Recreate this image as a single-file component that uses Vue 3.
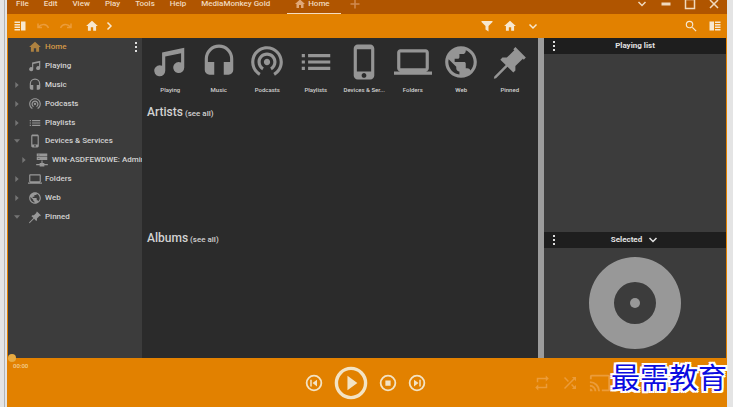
<script setup>
import { ref } from 'vue'

const icons = {
  home: 'M10 20v-6h4v6h5v-8h3L12 3 2 12h3v8z',
  note: 'M21 3v12.5a3.5 3.5 0 1 1-2-3.16V6.47L9 8.6v8.9a3.5 3.5 0 1 1-2-3.16V6z',
  headset: 'M12 1a9 9 0 0 0-9 9v7a3 3 0 0 0 3 3h3v-8H5v-2a7 7 0 0 1 14 0v2h-4v8h3a3 3 0 0 0 3-3v-7a9 9 0 0 0-9-9z',
  podcast: 'M12 10c-1.1 0-2 .9-2 2s.9 2 2 2 2-.9 2-2-.9-2-2-2zm6 2c0-3.31-2.69-6-6-6s-6 2.69-6 6c0 2.22 1.21 4.15 3 5.19l1-1.74c-1.19-.7-2-1.97-2-3.45 0-2.21 1.79-4 4-4s4 1.79 4 4c0 1.48-.81 2.75-2 3.45l1 1.74c1.79-1.04 3-2.97 3-5.19zM12 2C6.48 2 2 6.48 2 12c0 3.7 2.01 6.92 4.99 8.65l1-1.73C5.61 17.53 4 14.96 4 12c0-4.42 3.58-8 8-8s8 3.58 8 8c0 2.96-1.61 5.53-4 6.92l1 1.73c2.99-1.73 5-4.95 5-8.65 0-5.52-4.48-10-10-10z',
  list: 'M3 13h2v-2H3v2zm0 4h2v-2H3v2zm0-8h2V7H3v2zm4 4h14v-2H7v2zm0 4h14v-2H7v2zM7 7v2h14V7H7z',
  phone: 'M16 1H8C6.62 1 5.5 2.12 5.5 3.5v17C5.5 21.88 6.62 23 8 23h8c1.38 0 2.5-1.12 2.5-2.5v-17C18.5 2.12 17.38 1 16 1zm-4 21c-.83 0-1.5-.67-1.5-1.5S11.17 19 12 19s1.5.67 1.5 1.5S12.83 22 12 22zm4.5-4h-9V4h9v14z',
  laptop: 'M20 18c1.1 0 2-.9 2-2V6c0-1.1-.9-2-2-2H4c-1.1 0-2 .9-2 2v10c0 1.1.9 2 2 2H0v2h24v-2h-4zM4 6h16v10H4V6z',
  globe: 'M12 2C6.48 2 2 6.48 2 12s4.48 10 10 10 10-4.48 10-10S17.52 2 12 2zm-1 17.93c-3.95-.49-7-3.85-7-7.93 0-.62.08-1.21.21-1.79L9 15v1c0 1.1.9 2 2 2v1.93zm6.9-2.54c-.26-.81-1-1.39-1.9-1.39h-1v-3c0-.55-.45-1-1-1H8v-2h2c.55 0 1-.45 1-1V7h2c1.1 0 2-.9 2-2v-.41c2.93 1.19 5 4.06 5 7.41 0 2.08-.8 3.97-2.1 5.39z',
  pin: 'M10.4 15 3.2 22.2l-1.4.3.3-1.400 7.200-7.200-3.400-3.400 1.300-1.300h2.800l4.700-4.700-.6-.6 1.300-1.300 6.600 6.600-1.300 1.300-.6-.6-4.700 4.700v2.800l-1.300 1.300z',
  server: 'M3 1h18v5H3zm0 6h18v5H3zm8 6h2v4h3v2h6v2h-6v2H8v-2H2v-2h6v-2h3zM5 3v1h3V3zm0 6v1h3V9z',
  filter: 'M1 2h22v2l-8 8v11l-6-4v-7L1 4z',
  search: 'M15.5 14h-.79l-.28-.27A6.47 6.47 0 0 0 16 9.5 6.5 6.5 0 1 0 9.5 16c1.61 0 3.09-.59 4.23-1.57l.27.28v.79l6 6L21.5 20l-6-6zm-6 0a4.5 4.5 0 1 1 0-9 4.5 4.5 0 0 1 0 9z',
  panelLeft: 'M1 3h11v3H1zm0 5h11v3H1zm0 5h11v3H1zm0 5h11v3H1zM14 3h9v18h-9z',
  panelRight: 'M1 3h9v18H1zM12 3h11v3H12zm0 5h11v3H12zm0 5h11v3H12zm0 5h11v3H12z',
  repeat: 'M7 7h10v3l4-4-4-4v3H5v6h2V7zm10 10H7v-3l-4 4 4 4v-3h12v-6h-2v4z',
  shuffle: 'M10.59 9.17 5.41 4 4 5.41l5.17 5.17 1.42-1.41zM14.5 4l2.04 2.04L4 18.59 5.41 20 17.96 7.46 20 9.5V4h-5.5zm.33 9.41-1.41 1.41 3.13 3.13L14.5 20H20v-5.5l-2.04 2.04-3.13-3.13z',
  cast: 'M21 3H3c-1.1 0-2 .9-2 2v3h2V5h18v14h-7v2h7c1.1 0 2-.9 2-2V5c0-1.1-.9-2-2-2zM1 18v3h3c0-1.66-1.34-3-3-3zm0-4v2a5 5 0 0 1 5 5h2a7 7 0 0 0-7-7zm0-4v2a9 9 0 0 1 9 9h2A11 11 0 0 0 1 10z',
  previous: 'M12 1a11 11 0 1 0 0 22 11 11 0 0 0 0-22zm0 2.400a8.600 8.600 0 1 1 0 17.200 8.600 8.600 0 0 1 0-17.200zM7 7.500v9h2v-9zm9 0L10 12l6 4.500z',
  next: 'M12 1a11 11 0 1 0 0 22 11 11 0 0 0 0-22zm0 2.400a8.600 8.600 0 1 1 0 17.200 8.600 8.600 0 0 1 0-17.200zM15 7.500v9h2v-9zm-7 0 6 4.500-6 4.500z',
  stop: 'M12 1a11 11 0 1 0 0 22 11 11 0 0 0 0-22zm0 2.400a8.600 8.600 0 1 1 0 17.200 8.600 8.600 0 0 1 0-17.200zM8.500 8.500v7h7v-7z',
  play: 'M12 .5a11.5 11.5 0 1 0 0 23 11.5 11.5 0 0 0 0-23zm0 2.4a9.1 9.1 0 1 1 0 18.2 9.1 9.1 0 0 1 0-18.2zM9.500 6.800v10.400l7-5.200z',
  dots: 'M10 2h4v4h-4zm0 8h4v4h-4zm0 8h4v4h-4z',
  arrowRight: 'M7 3v18l10-9z',
  arrowDown: 'M3 7h18l-9 10z'
}

const menus = ['File', 'Edit', 'View', 'Play', 'Tools', 'Help', 'MediaMonkey Gold']

const tree = [
  { label: 'Home', icon: 'home', active: true },
  { label: 'Playing', icon: 'note' },
  { label: 'Music', icon: 'headset', arrow: 'arrowRight' },
  { label: 'Podcasts', icon: 'podcast', arrow: 'arrowRight' },
  { label: 'Playlists', icon: 'list', arrow: 'arrowRight' },
  { label: 'Devices & Services', icon: 'phone', arrow: 'arrowDown' },
  { label: 'WIN-ASDFEWDWE: Admin', icon: 'server', arrow: 'arrowRight', nested: true },
  { label: 'Folders', icon: 'laptop', arrow: 'arrowRight' },
  { label: 'Web', icon: 'globe', arrow: 'arrowRight' },
  { label: 'Pinned', icon: 'pin', arrow: 'arrowDown' }
]

const tiles = [
  { label: 'Playing', icon: 'note' },
  { label: 'Music', icon: 'headset' },
  { label: 'Podcasts', icon: 'podcast' },
  { label: 'Playlists', icon: 'list' },
  { label: 'Devices & Ser...', icon: 'phone' },
  { label: 'Folders', icon: 'laptop' },
  { label: 'Web', icon: 'globe' },
  { label: 'Pinned', icon: 'pin' }
]

const sections = ['Artists', 'Albums']
const position = ref(0)
</script>

<template>
  <div class="desktop">
    <div class="window">
      <header class="titlebar">
        <nav class="menus" aria-label="Main menu">
          <button v-for="m in menus" :key="m">{{ m }}</button>
        </nav>
        <button class="tab">
          <svg class="i12" viewBox="0 0 24 24"><path :d="icons.home" /></svg>Home
        </button>
        <button class="add" aria-label="New tab">
          <svg class="i12 line" viewBox="0 0 24 24"><path d="M12 3v18M3 12h18" /></svg>
        </button>
        <div class="controls">
          <button aria-label="More"><svg class="i12 line" viewBox="0 0 24 24"><path d="m5 8 7 7 7-7" /></svg></button>
          <button aria-label="Minimize"><svg class="i12 line bold" viewBox="0 0 24 24"><path d="M3 12h18" /></svg></button>
          <button aria-label="Maximize"><svg class="i12 line" viewBox="0 0 24 24"><path d="M3 3h18v18H3z" /></svg></button>
          <button aria-label="Close"><svg class="i12 line" viewBox="0 0 24 24"><path d="m4 4 16 16M20 4 4 20" /></svg></button>
        </div>
      </header>

      <div class="toolbar">
        <div class="tools">
          <button aria-label="Toggle tree"><svg class="i12" viewBox="0 0 24 24"><path :d="icons.panelLeft" /></svg></button>
          <button class="dim" aria-label="Undo"><svg class="i12 line" viewBox="0 0 24 24"><path d="M2 7v8h8M3 14C9 7 19 7 23 16" /></svg></button>
          <button class="dim" aria-label="Redo"><svg class="i12 line" viewBox="0 0 24 24"><path d="M22 7v8h-8M21 14C15 7 5 7 1 16" /></svg></button>
          <span class="crumbs">
            <button aria-label="Home"><svg class="i14" viewBox="0 0 24 24"><path :d="icons.home" /></svg></button>
            <button aria-label="Path"><svg class="i12 line" viewBox="0 0 24 24"><path d="m9 5 7 7-7 7" /></svg></button>
          </span>
        </div>
        <div class="tools">
          <button aria-label="Filter"><svg class="i12" viewBox="0 0 24 24"><path :d="icons.filter" /></svg></button>
          <button aria-label="View"><svg class="i14" viewBox="0 0 24 24"><path :d="icons.home" /></svg></button>
          <button aria-label="View options"><svg class="i12 line" viewBox="0 0 24 24"><path d="m5 9 7 7 7-7" /></svg></button>
        </div>
        <div class="tools end">
          <button aria-label="Search"><svg class="i14" viewBox="0 0 24 24"><path :d="icons.search" /></svg></button>
          <button aria-label="Toggle list"><svg class="i12" viewBox="0 0 24 24"><path :d="icons.panelRight" /></svg></button>
        </div>
      </div>

      <div class="body">
        <aside class="sidebar">
          <ul class="tree">
            <li v-for="t in tree" :key="t.label" :class="{ active: t.active, nested: t.nested }">
              <svg class="arrow" viewBox="0 0 24 24"><path v-if="t.arrow" :d="icons[t.arrow]" /></svg>
              <button class="node">
                <svg class="i14" viewBox="0 0 24 24"><path fill-rule="evenodd" :d="icons[t.icon]" /></svg>{{ t.label }}
              </button>
              <button v-if="t.active" class="kebab" aria-label="Tree options">
                <svg class="i12" viewBox="0 0 24 24"><path :d="icons.dots" /></svg>
              </button>
            </li>
          </ul>
        </aside>

        <main class="content">
          <div class="tiles">
            <button v-for="t in tiles" :key="t.label" class="tile">
              <svg viewBox="0 0 24 24"><path :d="icons[t.icon]" /></svg>{{ t.label }}
            </button>
          </div>
          <section v-for="s in sections" :key="s" class="section">
            <h2>{{ s }} <a href="#">(see all)</a></h2>
          </section>
        </main>

        <div class="splitter"></div>

        <aside class="panels">
          <section class="playing">
            <div class="panel-head">
              <button class="kebab" aria-label="Playing list options"><svg class="i12" viewBox="0 0 24 24"><path :d="icons.dots" /></svg></button>
              <h3>Playing list</h3>
            </div>
          </section>
          <section>
            <div class="panel-head">
              <button class="kebab" aria-label="Selected options"><svg class="i12" viewBox="0 0 24 24"><path :d="icons.dots" /></svg></button>
              <h3><button class="select">Selected <svg class="i12 line" viewBox="0 0 24 24"><path d="m5 8 7 7 7-7" /></svg></button></h3>
            </div>
            <div class="art">
              <svg viewBox="0 0 92 92"><path fill-rule="evenodd" d="M46 0a46 46 0 1 0 0 92 46 46 0 0 0 0-92zm0 25a21 21 0 1 1 0 42 21 21 0 0 1 0-42z" /><circle cx="46" cy="46" r="5" /></svg>
            </div>
          </section>
        </aside>
      </div>

      <footer class="player">
        <input v-model="position" class="seek" type="range" min="0" max="100" aria-label="Position">
        <span class="time">00:00</span>
        <div class="transport">
          <button aria-label="Previous"><svg class="i18" viewBox="0 0 24 24"><path fill-rule="evenodd" :d="icons.previous" /></svg></button>
          <button aria-label="Play"><svg class="i34" viewBox="0 0 24 24"><path fill-rule="evenodd" :d="icons.play" /></svg></button>
          <button aria-label="Stop"><svg class="i18" viewBox="0 0 24 24"><path fill-rule="evenodd" :d="icons.stop" /></svg></button>
          <button aria-label="Next"><svg class="i18" viewBox="0 0 24 24"><path fill-rule="evenodd" :d="icons.next" /></svg></button>
        </div>
        <div class="modes">
          <button aria-label="Repeat"><svg class="i18" viewBox="0 0 24 24"><path :d="icons.repeat" /></svg></button>
          <button aria-label="Shuffle"><svg class="i18" viewBox="0 0 24 24"><path :d="icons.shuffle" /></svg></button>
          <button aria-label="Cast"><svg class="i22" viewBox="0 0 24 24"><path :d="icons.cast" /></svg></button>
        </div>
        <span class="mark">最需教育</span>
      </footer>
    </div>
  </div>
</template>

<style>
body {
  overflow: hidden;
}
</style>

<style scoped>
.desktop {
  box-sizing: border-box;
  min-height: 100vh;
  display: flex;
  padding: 0 6px 0 4px;
  background: #e4e4e4;
  font: 500 8px/12px Roboto, "Noto Sans CJK SC", sans-serif;
  color: #d2d2d2;
}
.window {
  flex: 1;
  min-width: 0;
  display: flex;
  flex-direction: column;
  border-left: 1px solid #b4b4b4;
  padding-left: 2px;
}
button {
  display: flex;
  align-items: center;
  padding: 0;
  border: 0;
  background: none;
  color: inherit;
  font: inherit;
  white-space: nowrap;
}
svg {
  display: block;
  flex: none;
  fill: currentColor;
}
.line {
  fill: none;
  stroke: currentColor;
  stroke-width: 3;
}
.bold {
  stroke-width: 6;
}
.i12 { width: 12px; height: 12px; }
.i14 { width: 14px; height: 14px; }
.i18 { width: 18px; height: 18px; }
.i22 { width: 22px; height: 22px; }
.i34 { width: 34px; height: 34px; }

.titlebar {
  display: flex;
  align-items: center;
  height: 21px;
  margin-top: -7px;
  padding: 0 7px 0 9px;
  background: #b05500;
  color: #f0d9be;
  line-height: 7px;
}
.menus {
  display: flex;
  gap: 15px;
}
.tab {
  box-sizing: border-box;
  height: 21px;
  gap: 2px;
  margin-left: 17px;
  padding: 1px 11px 0 7px;
  border-bottom: 1px solid #f4dcc0;
}
.tab svg {
  color: #e0a878;
}
.add {
  margin-left: 8px;
  color: #d08a50;
}
.controls {
  display: flex;
  gap: 12px;
  margin-left: auto;
}
.toolbar {
  display: flex;
  align-items: center;
  height: 24px;
  padding-left: 7px;
  background: #e28100;
  color: #f7e8d0;
}
.tools {
  display: flex;
  align-items: center;
  gap: 11px;
}
.tools:nth-child(2) {
  gap: 10px;
  margin-left: auto;
}
.crumbs {
  display: flex;
  align-items: center;
  gap: 4px;
  margin-left: 2px;
}
.dim {
  color: #eb9c3a;
}
.end {
  box-sizing: border-box;
  width: 188px;
  justify-content: flex-end;
  padding-right: 6px;
}

.body {
  flex: 1;
  display: flex;
  border: solid #e28100;
  border-width: 0 1px;
  background: #2b2b2b;
}
.sidebar {
  width: 134px;
  overflow: hidden;
  background: #3c3c3c;
}
.tree {
  display: grid;
  grid-auto-rows: 1fr;
  height: 188px;
  margin: 0;
  padding: 0;
  list-style: none;
}
.tree li {
  display: flex;
  align-items: center;
  gap: 7px;
  padding-left: 5px;
}
.tree .nested {
  padding-left: 12px;
}
.tree svg {
  color: #989898;
}
.arrow {
  width: 8px;
  height: 8px;
}
.tree .arrow {
  color: #747474;
}
.node {
  gap: 3px;
}
.tree .active .node {
  color: #d69a48;
}
.tree .active .node svg {
  color: #ad8140;
}
.tree .kebab {
  margin-left: auto;
  padding-right: 3px;
}
.tree .kebab svg,
.kebab {
  color: #dedede;
}

.content {
  flex: 1;
  min-width: 0;
  padding: 5px 4px 0;
}
.tiles {
  display: grid;
  grid-template-columns: repeat(8, 1fr);
  margin-bottom: 8px;
}
.tile {
  flex-direction: column;
  gap: 3px;
  font-size: 6px;
}
.tile svg {
  width: 38px;
  height: 38px;
  color: #959595;
}
.section {
  min-height: 126px;
  padding-left: 1px;
}
h2 {
  margin: 0;
  font-size: 12px;
  line-height: 16px;
  font-weight: 500;
}
h2 a {
  margin-left: -1px;
  color: inherit;
  font-size: 8px;
  text-decoration: none;
}
.splitter {
  width: 6px;
  background: #9c9c9c;
}
.panels {
  width: 182px;
  display: flex;
  flex-direction: column;
  background: #3c3c3c;
}
.playing {
  flex: 1;
}
.panel-head {
  display: grid;
  grid-template-columns: 12px 1fr 12px;
  align-items: center;
  height: 16px;
  padding: 0 4px;
  background: #1e1e1e;
  color: #e2e2e2;
}
h3 {
  display: flex;
  justify-content: center;
  margin: 0;
  font-size: 8px;
  font-weight: 700;
}
.select {
  gap: 5px;
}
.art {
  display: flex;
  justify-content: center;
  padding: 9px;
  color: #989898;
}
.art svg {
  width: 92px;
  height: 92px;
}

.player {
  position: relative;
  display: grid;
  grid-template-columns: 1fr auto 1fr;
  align-items: center;
  height: 49px;
  background: #e28100;
  color: #f3e3c4;
}
.seek {
  position: absolute;
  inset: -4px 0 auto 1px;
  height: 8px;
  margin: 0;
  appearance: none;
  background: none;
}
.seek::-webkit-slider-thumb {
  appearance: none;
  width: 8px;
  height: 8px;
  border-radius: 50%;
  background: #e8ab42;
}
.time {
  align-self: start;
  padding: 2px 6px;
  font-size: 6px;
  color: #f3cf96;
}
.transport {
  display: flex;
  align-items: center;
  gap: 11px;
  padding-right: 4px;
}
.modes {
  display: flex;
  align-items: center;
  justify-content: flex-end;
  gap: 10px;
  padding-right: 116px;
  color: #eb9c3a;
}
.mark {
  position: absolute;
  right: 0;
  top: 0;
  font: 400 29px/36px "Noto Sans CJK SC", sans-serif;
  color: #0b0be0;
  text-shadow: 2px 0 #fff, -2px 0 #fff, 0 2px #fff, 0 -2px #fff, 2px 2px #fff, -2px 2px #fff, 2px -2px #fff, -2px -2px #fff;
}
</style>
